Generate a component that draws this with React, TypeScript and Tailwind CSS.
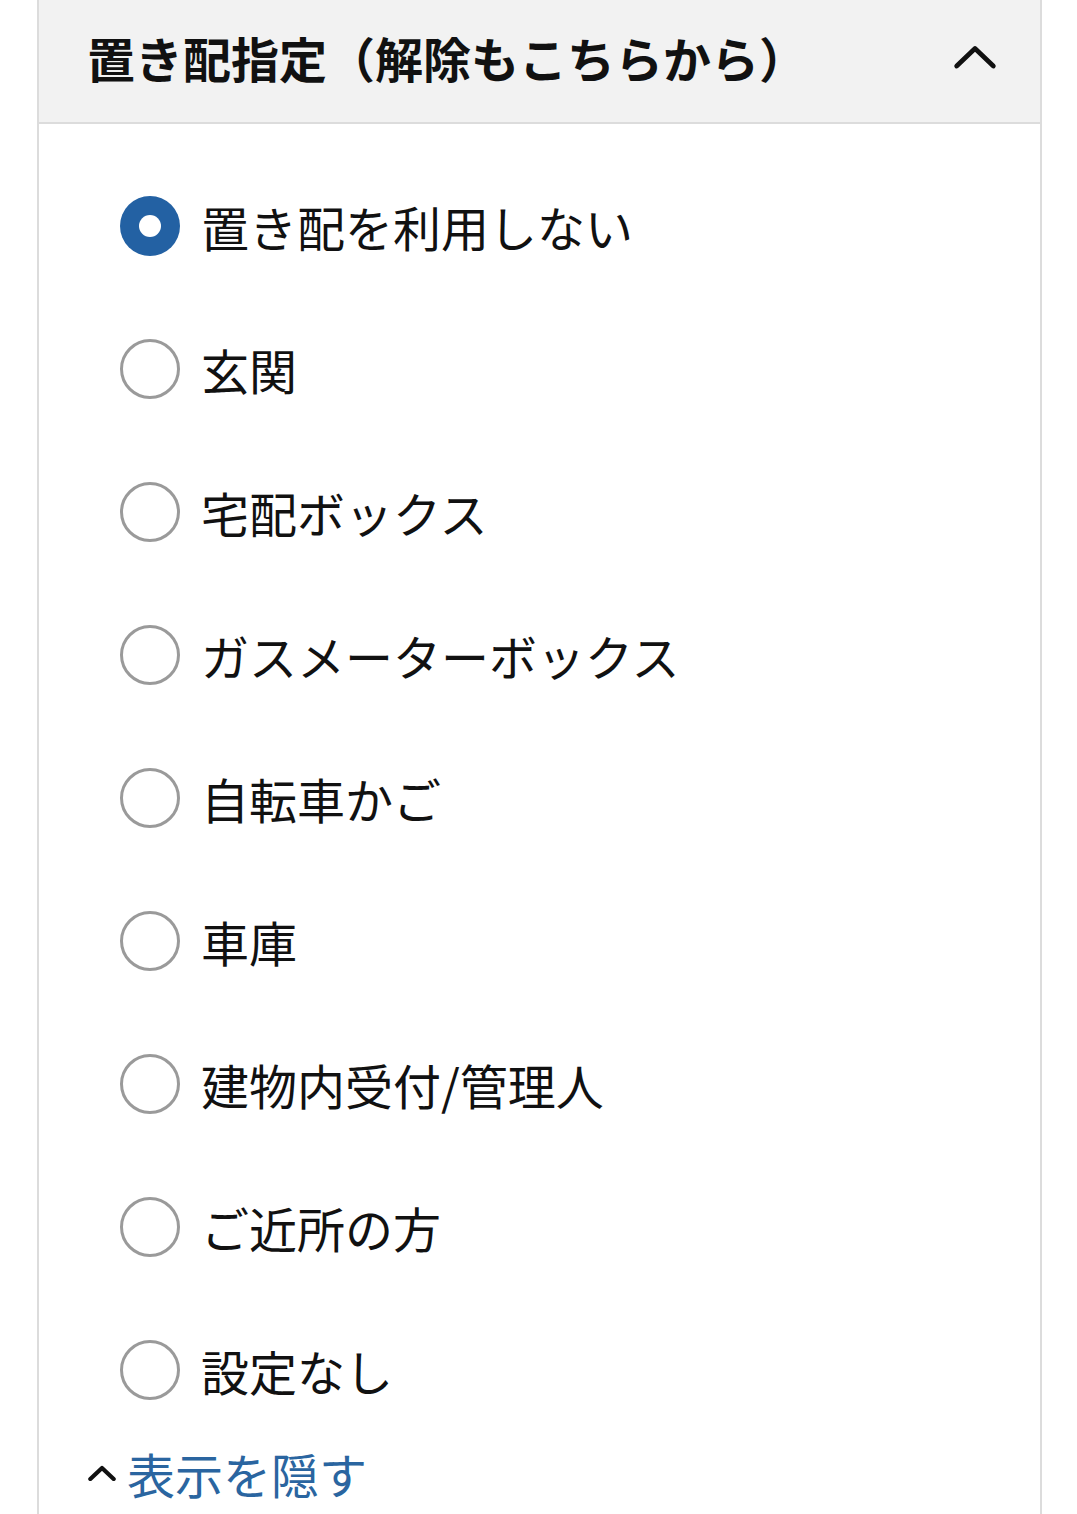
import { useState } from 'react';

const options = [
    '置き配を利用しない',
    '玄関',
    '宅配ボックス',
    'ガスメーターボックス',
    '自転車かご',
    '車庫',
    '建物内受付/管理人',
    'ご近所の方',
    '設定なし',
];

const ChevronUp = ({ className, weight = 2.6 }: { className?: string; weight?: number }) => (
    <svg viewBox="0 0 24 14" fill="none" className={className}>
        <path d="M2 12 L12 2.5 L22 12" stroke="currentColor" strokeWidth={weight} strokeLinecap="round" strokeLinejoin="round" />
    </svg>
);

export default function App() {
    const [selected, setSelected] = useState(0);

    return (
        <div className="min-h-[1514px] bg-white pl-[37px] pr-[35px] font-['Noto_Sans_CJK_JP','Noto_Sans',sans-serif]">
            <div className="min-h-[1514px] border-x-2 border-[#dcdcdc]">
                {/* Header */}
                <div className="flex h-[124px] items-center justify-between border-b-2 border-[#dcdcdc] bg-[#f2f2f2] pl-[48px] pr-[43px]">
                    <h2 className="mt-[-8px] text-[48px] font-bold leading-none text-[#111]">
                        置き配指定（解除もこちらから）
                    </h2>
                    <ChevronUp className="mt-[-8px] w-[44px] text-[#111]" />
                </div>

                {/* Options */}
                <div className="pl-[81px] pt-[30px]">
                    {options.map((label, i) => (
                        <label
                            key={label}
                            className="flex h-[143px] cursor-pointer items-center gap-[21px]"
                            onClick={() => setSelected(i)}
                        >
                            {selected === i ? (
                                <span className="flex h-[60px] w-[60px] items-center justify-center rounded-full bg-[#2361a3]">
                                    <span className="h-[22px] w-[22px] rounded-full bg-white" />
                                </span>
                            ) : (
                                <span className="h-[60px] w-[60px] rounded-full border-[3px] border-[#9a9a9a] bg-white" />
                            )}
                            <span className="text-[48px] leading-none text-[#111]">{label}</span>
                        </label>
                    ))}
                </div>

                {/* Hide link */}
                <div className="flex items-center gap-[11px] pl-[49px] pt-[8px]">
                    <ChevronUp className="w-[28px] text-[#111]" weight={3.6} />
                    <span className="text-[48px] leading-none text-[#2a65a0]">表示を隠す</span>
                </div>
            </div>
        </div>
    );
}
